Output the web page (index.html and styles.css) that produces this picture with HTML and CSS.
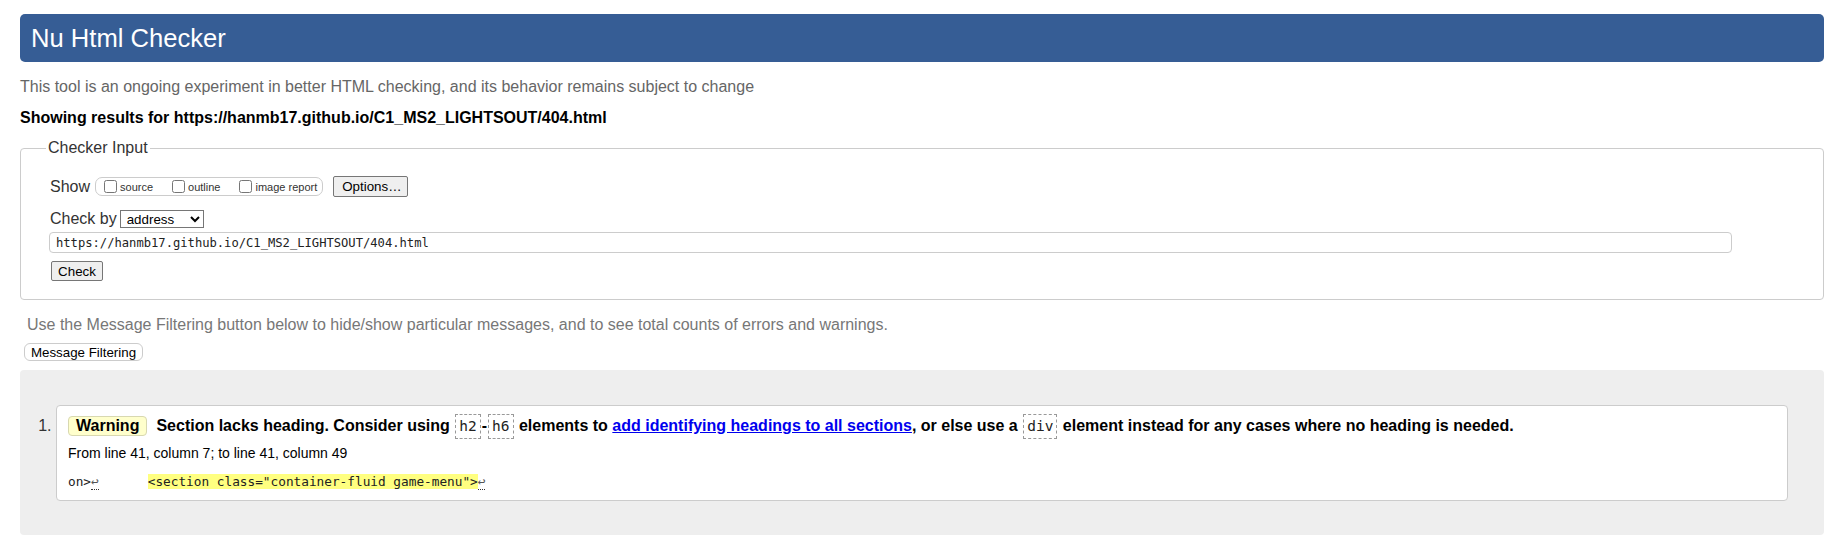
FILE: index.html
```html
<!DOCTYPE html>
<html lang="en">
<head>
<meta charset="utf-8">
<title>Nu Html Checker</title>
<link rel="stylesheet" href="styles.css">
</head>
<body>
<h1 class="title">Nu Html Checker</h1>
<p class="intro">This tool is an ongoing experiment in better HTML checking, and its behavior remains subject to change</p>
<p class="showing">Showing results for https://hanmb17.github.io/C1_MS2_LIGHTSOUT/404.html</p>
<fieldset class="checker">
  <legend class="legend">Checker Input</legend>
  <div class="row row-show">
    <span class="lbl">Show</span>
    <span class="cbgroup">
      <label class="cb"><input type="checkbox"><span>source</span></label>
      <label class="cb"><input type="checkbox"><span>outline</span></label>
      <label class="cb cb-last"><input type="checkbox"><span>image report</span></label>
    </span>
    <button class="btn btn-options" type="button">Options…</button>
  </div>
  <div class="row row-by">
    <span class="lbl">Check by</span>
    <select class="sel"><option>address</option></select>
  </div>
  <div class="row row-url">
    <input class="url" type="text" value="https://hanmb17.github.io/C1_MS2_LIGHTSOUT/404.html">
  </div>
  <div class="row row-check">
    <button class="btn btn-check" type="button">Check</button>
  </div>
</fieldset>
<p class="filter-hint">Use the Message Filtering button below to hide/show particular messages, and to see total counts of errors and warnings.</p>
<button class="btn-filter" type="button">Message Filtering</button>
<div class="results">
  <ol class="msgs">
    <li class="msg">
      <p class="msg-head"><strong class="badge">Warning</strong><span class="msg-text">Section lacks heading. Consider using <code class="tag">h2</code>-<code class="tag">h6</code> elements to <a href="#" class="link">add identifying headings to all sections</a>, or else use a <code class="tag">div</code> element instead for any cases where no heading is needed.</span></p>
      <p class="location">From line 41, column 7; to line 41, column 49</p>
      <p class="extract"><code class="ex">on&gt;<span class="lf">↩</span><span class="gap"></span><mark class="hl">&lt;section class="container-fluid game-menu"&gt;</mark><span class="lf">↩</span></code></p>
    </li>
  </ol>
</div>
</body>
</html>
```
FILE: styles.css
```css
html, body {
  background: #fff;
}
body {
  margin: 0;
  padding: 14px 21px 40px 20px;
  font-family: "Liberation Sans", Arial, sans-serif;
  font-size: 16px;
  line-height: 18px;
  color: #000;
}
.title {
  margin: 0;
  height: 48px;
  line-height: 48px;
  padding: 0 11px;
  background: #365d95;
  color: #fff;
  font-size: 25.6px;
  font-weight: normal;
  border-radius: 5px;
}
.intro {
  margin: 16px 0 0;
  color: #666;
}
.showing {
  margin: 13px 0 0;
  font-weight: bold;
}
.checker {
  margin: 12px 0 0;
  border: 1px solid #ccc;
  border-radius: 4px;
  padding: 0 25px 18px 25px;
  min-width: 0;
}
.legend {
  padding: 0 2px;
  margin-left: 0;
  line-height: 18px;
  color: #333;
}
.row {
  display: flex;
  align-items: center;
  margin-left: 4px;
}
.row-show {
  margin-top: 18px;
  height: 23px;
}
.row-by {
  margin-top: 10px;
  height: 22px;
}
.row-url {
  margin-top: 2px;
  margin-left: 3px;
  margin-right: 66px;
}
.row-check {
  margin-top: 8px;
  margin-left: 5px;
}
.lbl {
  color: #333;
}
.cbgroup {
  display: flex;
  align-items: center;
  height: 17px;
  margin-left: 5px;
  padding: 0 5px 0 8px;
  border: 1px solid #ccc;
  border-radius: 7px;
}
.cb {
  display: flex;
  align-items: center;
  font-size: 11px;
  color: #333;
  margin-right: 19px;
}
.cb-last {
  margin-right: 0;
}
.cb input {
  margin: 0 3px 0 0;
  width: 13px;
  height: 13px;
}
.btn {
  font-family: "Liberation Sans", Arial, sans-serif;
  font-size: 13.33px;
  color: #000;
  background: #efefef;
  border: 1px solid #767676;
  border-radius: 2px;
  padding: 0 8px;
}
.btn-options {
  margin-left: 10px;
  height: 21px;
  width: 75px;
}
.btn-check {
  height: 20px;
  width: 52px;
  padding: 0 6px;
}
.sel {
  margin-left: 3px;
  width: 84px;
  height: 18px;
  font-family: "Liberation Sans", Arial, sans-serif;
  font-size: 13.33px;
  color: #000;
  background: #fff;
  border: 1px solid #767676;
  border-radius: 0;
  padding: 0 2px;
}
.url {
  flex: 1;
  height: 21px;
  box-sizing: border-box;
  border: 1px solid #ccc;
  border-radius: 4px;
  padding: 0 6px;
  font-family: "DejaVu Sans Mono", "Liberation Mono", monospace;
  font-size: 12.15px;
  color: #222;
  background: #fff;
}
.filter-hint {
  margin: 16px 0 0;
  padding-left: 7px;
  color: #777;
}
.btn-filter {
  display: block;
  margin: 9px 0 0 4px;
  height: 18px;
  width: 119px;
  padding: 0;
  background: #fff;
  border: 1px solid #ccc;
  border-radius: 6px;
  font-family: "Liberation Sans", Arial, sans-serif;
  font-size: 13.33px;
  color: #000;
}
.results {
  margin-top: 9px;
  background: #eee;
  border-radius: 4px;
  padding: 35px 36px 34px 36px;
}
.msgs {
  margin: 0;
  padding: 0;
  list-style: decimal outside;
  color: #333;
}
.msg {
  background: #fff;
  border: 1px solid #ccc;
  border-radius: 4px;
  padding: 7px 12px 9px 11px;
}
.msg-head {
  margin: 0;
  line-height: 26px;
  color: #000;
  font-weight: bold;
}
.badge {
  display: inline-block;
  line-height: 18px;
  padding: 0 7px;
  background: #ffffcc;
  border: 1px solid #d8d8b0;
  border-radius: 4px;
  margin-right: 9px;
}
.tag {
  display: inline-block;
  font-family: "DejaVu Sans Mono", "Liberation Mono", monospace;
  font-weight: normal;
  font-size: 14.5px;
  line-height: 21px;
  padding: 1px 3px;
  border: 1px dashed #999;
  color: #222;
  vertical-align: middle;
  margin: 0 1px;
}
.link {
  color: #0000ee;
  text-decoration: underline;
}
.location {
  margin: 5px 0 0;
  font-size: 14px;
  line-height: 18px;
  color: #000;
}
.extract {
  margin: 9px 0 0;
  line-height: 19px;
}
.ex {
  font-family: "DejaVu Sans Mono", "Liberation Mono", monospace;
  font-size: 12.75px;
  color: #222;
  white-space: pre;
}
.lf {
  color: #555;
  border-bottom: 1px dotted #333;
}
.gap {
  display: inline-block;
  width: 49px;
}
.hl {
  background: #ffff80;
  color: #222;
}
```
